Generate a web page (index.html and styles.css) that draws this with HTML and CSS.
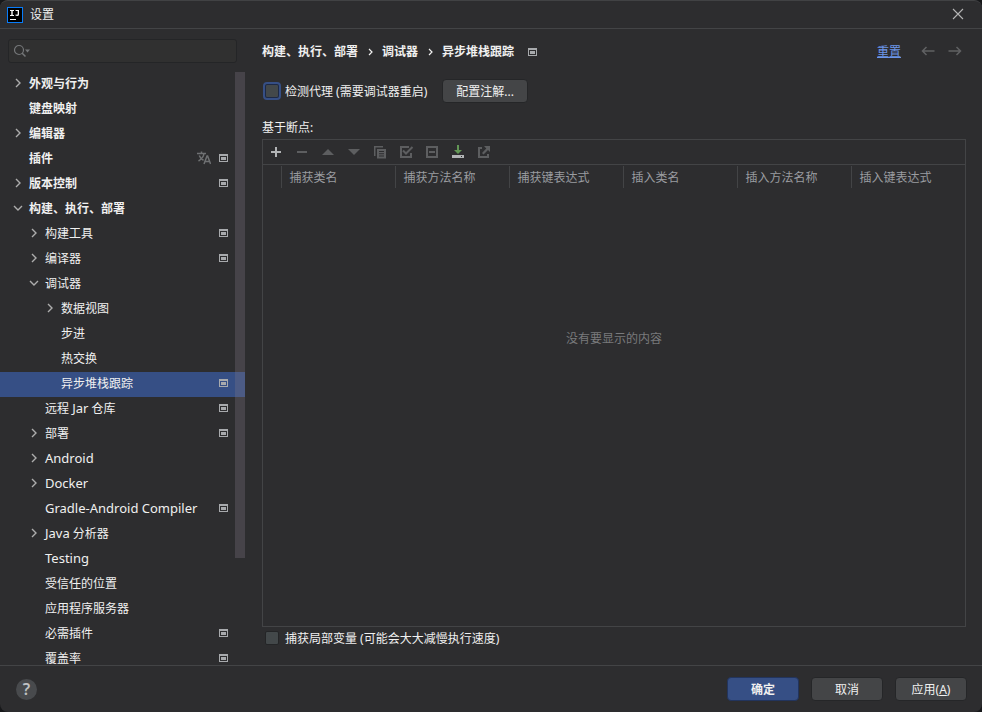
FILE: index.html
```html
<!DOCTYPE html>
<html lang="zh-CN">
<head>
<meta charset="utf-8">
<title>设置</title>
<link rel="stylesheet" href="styles.css">
</head>
<body>
<svg class="sprite" aria-hidden="true">
  <symbol id="right" viewBox="0 0 16 16"><path d="M6 4l4 4-4 4" fill="none" stroke="currentColor" stroke-width="1.4"/></symbol>
  <symbol id="down" viewBox="0 0 16 16"><path d="M4 6l4 4 4-4" fill="none" stroke="currentColor" stroke-width="1.4"/></symbol>
  <symbol id="project" viewBox="0 0 9 8"><path d="M0 0h9v8H0zM1 2v5h7V2z" fill="currentColor" fill-rule="evenodd"/><path d="M2 3h5v3H2z" fill="currentColor"/></symbol>
</svg>
<div class="window">
  <header class="titlebar">
    <svg class="logo" viewBox="0 0 16 16"><path d="M0 0h16v16H0z" fill="#087cfa"/><path d="M1 1h14v14H1z" fill="#000"/><path d="M3 3h4v1H5.700v4H7v1H3V8h1.300V4H3zM8.500 3H12v4.500Q12 9 10.300 9 9 9 8.200 8.200L9 7.300q.5.500 1 .5.700 0 .7-.8V4H8.500zM3 12h6v1H3z" fill="#fff"/></svg>
    <h1>设置</h1>
    <button class="close" aria-label="关闭"><svg viewBox="0 0 12 12"><path d="M1 1l10 10M11 1L1 11" stroke="currentColor" stroke-width="1.100"/></svg></button>
  </header>
  <div class="content">
    <aside class="sidebar">
      <div class="search">
        <svg viewBox="0 0 20 14"><circle cx="6" cy="6" r="4.500" fill="none" stroke="currentColor" stroke-width="1.200"/><path d="M9 9l3.500 3.500" stroke="currentColor" stroke-width="1.500"/><path d="M12 5.500h5L14.500 8.500z" fill="currentColor"/></svg>
        <input type="text" aria-label="搜索设置">
      </div>
      <nav class="tree-view">
        <ul class="tree">
          <li class="root"><svg class="arrow"><use href="#right"/></svg><span>外观与行为</span></li>
          <li class="root leaf"><span>键盘映射</span></li>
          <li class="root"><svg class="arrow"><use href="#right"/></svg><span>编辑器</span></li>
          <li class="root leaf"><span>插件</span><svg class="translate" viewBox="0 0 14 14"><path d="M0 2.500h9M4.500.5v2M1.500 10Q6.500 7 7 2.500M2.300 4.500Q3.500 8 6.500 9.300M7 13l3-8h.6l3 8M8 10.500h4.600" fill="none" stroke="currentColor" stroke-width="1.500"/></svg><svg class="project"><use href="#project"/></svg></li>
          <li class="root"><svg class="arrow"><use href="#right"/></svg><span>版本控制</span><svg class="project"><use href="#project"/></svg></li>
          <li class="root"><svg class="arrow"><use href="#down"/></svg><span>构建、执行、部署</span></li>
          <li class="second"><svg class="arrow"><use href="#right"/></svg><span>构建工具</span><svg class="project"><use href="#project"/></svg></li>
          <li class="second"><svg class="arrow"><use href="#right"/></svg><span>编译器</span><svg class="project"><use href="#project"/></svg></li>
          <li class="second"><svg class="arrow"><use href="#down"/></svg><span>调试器</span></li>
          <li class="third"><svg class="arrow"><use href="#right"/></svg><span>数据视图</span></li>
          <li class="third leaf"><span>步进</span></li>
          <li class="third leaf"><span>热交换</span></li>
          <li class="third leaf selected"><span>异步堆栈跟踪</span><svg class="project"><use href="#project"/></svg></li>
          <li class="second leaf"><span>远程 <b class="latin">Jar</b> 仓库</span><svg class="project"><use href="#project"/></svg></li>
          <li class="second"><svg class="arrow"><use href="#right"/></svg><span>部署</span><svg class="project"><use href="#project"/></svg></li>
          <li class="second"><svg class="arrow"><use href="#right"/></svg><span class="latin">Android</span></li>
          <li class="second"><svg class="arrow"><use href="#right"/></svg><span class="latin">Docker</span></li>
          <li class="second leaf"><span class="latin">Gradle-Android Compiler</span><svg class="project"><use href="#project"/></svg></li>
          <li class="second"><svg class="arrow"><use href="#right"/></svg><span><b class="latin">Java</b> 分析器</span></li>
          <li class="second leaf"><span class="latin">Testing</span></li>
          <li class="second leaf"><span>受信任的位置</span></li>
          <li class="second leaf"><span>应用程序服务器</span></li>
          <li class="second leaf"><span>必需插件</span><svg class="project"><use href="#project"/></svg></li>
          <li class="second leaf"><span>覆盖率</span><svg class="project"><use href="#project"/></svg></li>
        </ul>
        <div class="scrollbar"></div>
      </nav>
    </aside>
    <main class="page">
      <div class="page-head">
        <div class="crumbs">
          <span>构建、执行、部署</span><svg class="crumb-arrow" viewBox="0 0 5 8"><path d="M1 1l3 3-3 3" fill="none" stroke="currentColor" stroke-width="1.200"/></svg><span>调试器</span><svg class="crumb-arrow" viewBox="0 0 5 8"><path d="M1 1l3 3-3 3" fill="none" stroke="currentColor" stroke-width="1.200"/></svg><span>异步堆栈跟踪</span><svg class="project"><use href="#project"/></svg>
        </div>
        <a class="reset" href="#">重置</a>
        <button class="history" aria-label="后退"><svg viewBox="0 0 14 10"><path d="M13.500 5H1.500M5.500 1l-4 4 4 4" fill="none" stroke="currentColor" stroke-width="1.500"/></svg></button>
        <button class="history" aria-label="前进"><svg viewBox="0 0 14 10"><path d="M.5 5h12M8.500 1l4 4-4 4" fill="none" stroke="currentColor" stroke-width="1.500"/></svg></button>
      </div>
      <div class="agent">
        <label class="check"><input class="focused" type="checkbox"><span>检测代理 (需要调试器重启)</span></label>
        <button class="btn configure">配置注解...</button>
      </div>
      <h2>基于断点:</h2>
      <section class="panel">
        <div class="toolbar">
          <button class="tool on" aria-label="添加"><svg viewBox="0 0 16 16"><path d="M7 3h2v4h4v2H9v4H7V9H3V7h4z" fill="currentColor"/></svg></button>
          <button class="tool" aria-label="移除"><svg viewBox="0 0 16 16"><path d="M3 7h10v2H3z" fill="currentColor"/></svg></button>
          <button class="tool" aria-label="上移"><svg viewBox="0 0 16 16"><path d="M2 11h12L8 5z" fill="currentColor"/></svg></button>
          <button class="tool" aria-label="下移"><svg viewBox="0 0 16 16"><path d="M2 5h12l-6 6z" fill="currentColor"/></svg></button>
          <button class="tool" aria-label="复制"><svg viewBox="0 0 16 16"><path d="M2 2h9v1.500H3.500V12H2z" fill="currentColor"/><path d="M5 5h9v9.500H5zM7 7v1h5V7zM7 9.300v1h5v-1zM7 11.600v1h5v-1z" fill="currentColor" fill-rule="evenodd"/></svg></button>
          <button class="tool" aria-label="启用所选"><svg viewBox="0 0 16 16"><path d="M11 3H3v10h10V9" fill="none" stroke="currentColor" stroke-width="2"/><path d="M5 6.500l3 3L14.500 3" fill="none" stroke="currentColor" stroke-width="2"/></svg></button>
          <button class="tool" aria-label="禁用所选"><svg viewBox="0 0 16 16"><path d="M3 3h10v10H3z" fill="none" stroke="currentColor" stroke-width="2"/><path d="M5 7h6v2H5z" fill="currentColor"/></svg></button>
          <button class="tool on" aria-label="导入"><svg viewBox="0 0 16 16"><path d="M7 1h2v5h3L8 10 4 6h3z" fill="#629755"/><path d="M2 11h12v3H2zM11 12v1h1v-1z" fill="currentColor" fill-rule="evenodd"/></svg></button>
          <button class="tool" aria-label="导出"><svg viewBox="0 0 16 16"><path d="M6 4H3v9h9v-3" fill="none" stroke="currentColor" stroke-width="2"/><path d="M8 2h6v6l-2-2-4.500 4.500L6 9l4.300-4.500z" fill="currentColor"/></svg></button>
        </div>
        <table>
          <thead><tr><th class="toggle"></th><th>捕获类名</th><th>捕获方法名称</th><th>捕获键表达式</th><th>插入类名</th><th>插入方法名称</th><th>插入键表达式</th></tr></thead>
        </table>
        <div class="empty">没有要显示的内容</div>
      </section>
      <label class="check locals"><input type="checkbox"><span>捕获局部变量 (可能会大大减慢执行速度)</span></label>
    </main>
  </div>
  <footer class="footer">
    <button class="help" aria-label="帮助">?</button>
    <button class="btn primary">确定</button>
    <button class="btn">取消</button>
    <button class="btn">应用(<u>A</u>)</button>
  </footer>
</div>
</body>
</html>
```
FILE: styles.css
```css
* { box-sizing: border-box; }
body {
  margin: 0;
  background: #17181a;
  color: #f0f0f0;
  font: 12px/16px "Noto Sans", "Noto Sans CJK SC", sans-serif;
}
button, input { font: inherit; color: inherit; }
button { padding: 0; border: 0; background: none; }
svg { display: block; flex: none; }
h1, h2 { margin: 0; font-size: 12px; font-weight: 400; }
.sprite { position: absolute; width: 0; height: 0; }

.window {
  display: flex;
  flex-direction: column;
  height: 100vh;
  overflow: hidden;
  background: #2d2d2f;
  border-top: 1px solid #414244;
  border-radius: 8px;
}
.titlebar {
  display: flex;
  align-items: center;
  gap: 7px;
  height: 28px;
  padding: 0 18px 0 7px;
  border-bottom: 1px solid #434446;
}
.logo { width: 16px; height: 16px; }
.close { margin-left: auto; padding-bottom: 2px; color: #b4b4b4; }
.close svg { width: 12px; height: 12px; }

.content { display: flex; flex: 1; min-height: 0; }
.sidebar { display: flex; flex-direction: column; width: 245px; padding-top: 10px; }
.search {
  display: flex;
  align-items: center;
  height: 24px;
  margin: 0 8px 9px;
  padding-left: 4px;
  background: #303030;
  border: 1px solid #242527;
  border-radius: 3px;
  color: #747678;
}
.search svg { width: 20px; height: 14px; }
.search input { flex: 1; min-width: 0; border: 0; background: none; outline: none; }
.tree-view { position: relative; flex: 1; min-height: 0; overflow: hidden; }
.tree { margin: 0; padding: 0; list-style: none; }
.tree li { display: flex; align-items: center; height: 25px; padding-right: 17px; padding-bottom: 3px; }
.tree span { flex: 1; padding-top: 2px; white-space: nowrap; }
.tree .root { padding-left: 10px; font-weight: 700; }
.tree .second { padding-left: 26px; }
.tree .third { padding-left: 42px; }
.tree .root.leaf { padding-left: 29px; }
.tree .second.leaf { padding-left: 45px; }
.tree .third.leaf { padding-left: 61px; }
.tree .selected { background: #364f85; }
.tree .latin { padding-top: 0; font-size: 13px; font-weight: 400; }
.tree b { line-height: 12px; }
.arrow { width: 16px; height: 16px; margin-right: 3px; color: #adadad; }
.project { width: 9px; height: 8px; color: #a8aaad; }
.translate { width: 14px; height: 14px; margin-right: 8px; color: #6f7173; }
.scrollbar {
  position: absolute;
  top: 0;
  right: 0;
  width: 10px;
  height: 82%;
  background: rgba(128, 120, 136, 0.3);
}

.page { display: flex; flex: 1; flex-direction: column; min-width: 0; padding: 12px 16px 0 17px; }
.page-head { display: flex; align-items: center; height: 22px; }
.crumbs { display: flex; flex: 1; align-items: center; font-weight: 700; }
.crumb-arrow { width: 5px; height: 8px; margin: 0 9px 0 10px; }
.crumbs .project { margin-left: 14px; }
.reset { margin-right: 20px; color: #6b95e8; }
.history { padding-bottom: 2px; color: #606163; }
.history + .history { margin-left: 13px; margin-right: 4px; }
.history svg { width: 14px; height: 10px; }
.agent { display: flex; align-items: center; gap: 15px; height: 24px; margin-top: 16px; }
.check { display: flex; align-items: center; gap: 6px; padding-left: 3px; }
.check span { padding-top: 2px; }
.check input {
  appearance: none;
  width: 14px;
  height: 14px;
  margin: 0;
  border: 1px solid #242527;
  border-radius: 2px;
  background: #43484a;
}
.check .focused { border-color: #1d2945; outline: 2px solid #364f85; }
.btn {
  min-width: 72px;
  height: 24px;
  padding: 2px 12px 0;
  border: 1px solid #252628;
  border-radius: 4px;
  background: #444547;
}
.configure { padding: 2px 13px 0; }
.page h2 { margin: 17px 0 3px; }
.panel { display: flex; flex: 1; flex-direction: column; border: 1px solid #434446; }
.toolbar { display: flex; align-items: center; gap: 10px; height: 25px; padding-left: 5px; border-bottom: 1px solid #434446; }
.tool { color: #5d5e60; }
.tool.on { color: #b2b4b6; }
.tool svg { width: 16px; height: 16px; }
table { width: 100%; margin-top: 1px; border-collapse: collapse; table-layout: fixed; }
th {
  height: 22px;
  padding: 1px 0 0 8px;
  border-left: 1px solid #434446;
  color: #9a9ca0;
  font-weight: 400;
  text-align: left;
}
th.toggle { width: 18px; border-left: 0; }
.empty { display: flex; flex: 1; flex-direction: column; align-items: center; padding-top: 3px; color: #797a7c; }
.empty::before { content: ""; flex: 1; }
.empty::after { content: ""; flex: 2; }
.locals { height: 22px; margin-bottom: 16px; }

.footer {
  display: flex;
  align-items: center;
  gap: 12px;
  height: 47px;
  padding: 0 15px 0 16px;
  border-top: 1px solid #434446;
}
.help {
  width: 21px;
  height: 21px;
  margin-right: auto;
  border-radius: 50%;
  background: #484a4d;
  color: #bfc1c3;
  font-size: 16px;
  font-weight: 600;
  line-height: 21px;
}
.btn.primary { border-color: #22345d; background: #364f85; font-weight: 700; }
```
